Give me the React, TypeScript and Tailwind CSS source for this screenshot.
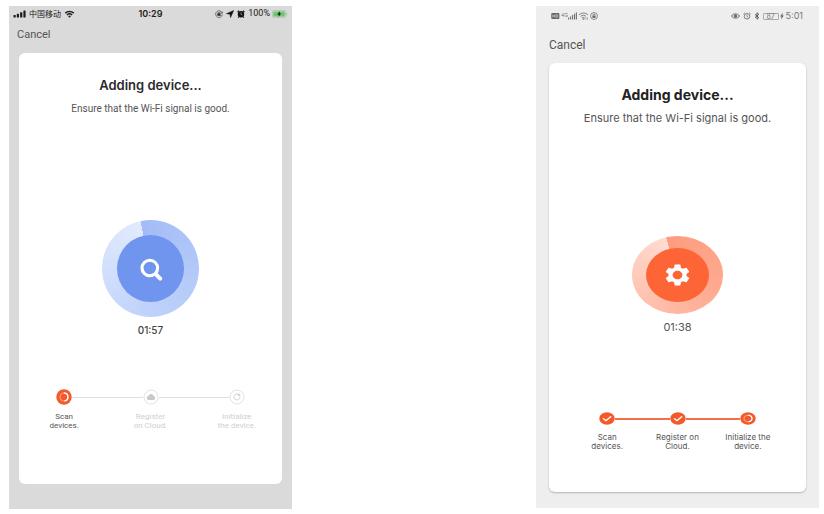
import type { ReactNode } from "react";
import { clsx } from "clsx";

interface Step {
  label: [string, string];
  state: "active" | "done" | "cloud" | "pending";
}

const iosSteps: Step[] = [
  { label: ["Scan", "devices."], state: "active" },
  { label: ["Register", "on Cloud."], state: "cloud" },
  { label: ["Initialize", "the device."], state: "pending" },
];

const androidSteps: Step[] = [
  { label: ["Scan", "devices."], state: "done" },
  { label: ["Register on", "Cloud."], state: "done" },
  { label: ["Initialize the", "device."], state: "active" },
];

function StepIcon({ state, className }: { state: Step["state"]; className: string }) {
  const filled = state === "active" || state === "done";
  return (
    <svg viewBox="0 0 16 16" preserveAspectRatio="none" className={className} fill="none" aria-hidden="true">
      <circle cx="8" cy="8" r={filled ? 7.7 : 7} fill={filled ? "#f4592b" : "#fff"} stroke={filled ? "none" : "#dedede"} strokeWidth="0.9" />
      {state === "active" && (
        <>
          <circle cx="8" cy="8" r="4" stroke="#fa9a7c" strokeWidth="1.2" />
          <path d="M8.3 4a4 4 0 0 1 .5 7.9" stroke="#fff" strokeWidth="1.3" strokeLinecap="round" />
        </>
      )}
      {state === "done" && (
        <path d="M4.4 8.2 7 10.7l4.7-4.9" stroke="#fff" strokeWidth="1.5" strokeLinecap="round" strokeLinejoin="round" />
      )}
      {state === "cloud" && (
        <path d="M5.7 10.9a1.9 1.9 0 0 1-.2-3.8 2.7 2.7 0 0 1 5.2-.1 2 2 0 0 1-.1 3.9z" fill="#c9c9c9" />
      )}
      {state === "pending" && (
        <path d="M10.5 6.3A3 3 0 1 0 11 8.2M10.8 4.9v1.7H9.2" stroke="#cbcbcb" strokeWidth="0.9" strokeLinecap="round" />
      )}
    </svg>
  );
}

interface StepsProps {
  steps: Step[];
  className: string;
  iconClassName: string;
  lineClassName: string;
  labelClassName: string;
}

function Steps({ steps, className, iconClassName, lineClassName, labelClassName }: StepsProps) {
  return (
    <ol className={clsx("grid grid-cols-3", className)}>
      {steps.map((step, i) => (
        <li key={step.label[0]}>
          <div className="flex items-center">
            <span className={clsx("flex-1", i > 0 && lineClassName)} />
            <StepIcon state={step.state} className={iconClassName} />
            <span className={clsx("flex-1", i < steps.length - 1 && lineClassName)} />
          </div>
          <p
            className={clsx(
              "text-center text-[8px] leading-[9px] whitespace-nowrap",
              labelClassName,
              step.state === "active" || step.state === "done" ? "text-[#555]" : "text-[#cfcfcf]",
            )}
          >
            {step.label[0]}
            <br />
            {step.label[1]}
          </p>
        </li>
      ))}
    </ol>
  );
}

function Dial({ ringClassName, coreClassName, children }: { ringClassName: string; coreClassName: string; children: ReactNode }) {
  return (
    <div className={clsx("mx-auto flex items-center justify-center rounded-[50%]", ringClassName)}>
      <div className={clsx("flex items-center justify-center rounded-[50%]", coreClassName)}>{children}</div>
    </div>
  );
}

function IosStatusBar() {
  return (
    <div className="grid h-4 grid-cols-[1fr_auto_1fr] items-center px-1 text-[9px] text-[#222]">
      <div className="flex items-center gap-[3px]">
        <svg viewBox="0 0 13 8" className="h-2 w-[13px]" fill="#1c1c1c" aria-hidden="true">
          <rect x="0.5" y="5" width="2.2" height="2.5" rx="0.6" />
          <rect x="3.8" y="3.8" width="2.2" height="3.7" rx="0.6" />
          <rect x="7.1" y="2.2" width="2.2" height="5.3" rx="0.6" />
          <rect x="10.4" y="0.4" width="2.2" height="7.1" rx="0.6" />
        </svg>
        <span className="font-['Noto_Sans_CJK_SC',sans-serif] text-[8px]">中国移动</span>
        <svg viewBox="0 0 12 9" className="h-2 w-[11px]" fill="none" stroke="#222" strokeWidth="1.7" aria-hidden="true">
          <path d="M1.2 3.5a7 7 0 0 1 9.6 0M3.1 5.6a4.2 4.2 0 0 1 5.8 0" />
          <path d="M4.4 7 6 8.6 7.6 7a2.3 2.3 0 0 0-3.2 0z" fill="#222" stroke="none" />
        </svg>
      </div>
      <span className="font-semibold">10:29</span>
      <div className="flex items-center justify-end gap-[3px]">
        <svg viewBox="0 0 10 10" className="size-2" fill="none" stroke="#333" strokeWidth="0.8" aria-hidden="true">
          <path d="M9.2 5.6A4.2 4.2 0 1 1 9 3.8M9.4 2.2 9 4.1 7.2 3.6" />
          <rect x="3.4" y="4.6" width="3.2" height="2.4" fill="#333" />
          <path d="M4 4.6v-.7a1 1 0 0 1 2 0v.7" />
        </svg>
        <svg viewBox="0 0 10 10" className="size-2" fill="#111" stroke="#111" strokeWidth="0.6" strokeLinejoin="round" aria-hidden="true">
          <path d="M9.6.6 5.7 9.5 4.9 5.3.5 4.6z" />
        </svg>
        <svg viewBox="0 0 10 10" className="size-2" aria-hidden="true">
          <circle cx="5" cy="5.3" r="4" fill="#111" />
          <path d="M.7 2.6 2.6.8M9.3 2.6 7.4.8M2.3 8.4 1.4 9.6M7.7 8.4l.9 1.2" stroke="#111" strokeWidth="1.4" />
          <path d="M5 3v2.5l1.7.8" stroke="#ddd" strokeWidth="0.7" fill="none" />
        </svg>
        <span className="font-[Roboto,sans-serif]">100%</span>
        <svg viewBox="0 0 17 8" className="-ml-px h-2 w-4" aria-hidden="true">
          <rect x="0.4" y="0.4" width="14.2" height="7.2" rx="1.8" fill="#dcdcdc" stroke="#9db79d" strokeWidth="0.7" />
          <rect x="1.4" y="1.3" width="12.2" height="5.4" rx="1" fill="#6acb6d" />
          <path d="M15.5 2.8c1 .3 1 2.1 0 2.4z" fill="#999" />
          <path d="M8.6.8 5.4 4.4h2L6.7 7.2l3.1-3.7H8z" fill="#111" />
        </svg>
      </div>
    </div>
  );
}

function AndroidStatusBar() {
  return (
    <div className="flex h-5 items-center justify-between pr-4 pl-[15px] text-[9px] text-[#777]">
      <div className="flex items-center gap-px">
        <svg viewBox="0 0 10 8" className="h-2 w-[9px]" aria-hidden="true">
          <rect x="0.3" y="0.7" width="9" height="6.6" rx="1" fill="#666" />
          <path d="M2 2.4v3.2M4.2 2.4v3.2M2 4h2.2M5.6 2.4v3.2h.8a1.2 1.6 0 0 0 0-3.2z" stroke="#ddd" strokeWidth="0.7" fill="none" />
        </svg>
        <span className="self-start text-[5px] leading-[7px]">4G</span>
        <svg viewBox="0 0 10 8" className="-ml-px h-2 w-[9px]" fill="#777" aria-hidden="true">
          <path d="M0 5.8h1.3V8H0zM2.2 4.5h1.3V8H2.2zM4.4 3h1.3v5H4.4zM6.6 1.6h1.3V8H6.6zM8.7 0H10v8H8.7z" />
        </svg>
        <svg viewBox="0 0 12 9" className="h-2 w-[11px]" fill="none" stroke="#777" strokeWidth="1" aria-hidden="true">
          <path d="M1 3.1a7.4 7.4 0 0 1 10 0M2.7 4.9a5 5 0 0 1 6.2-.2M4.3 6.6a2.6 2.6 0 0 1 3 0" />
          <path d="M5 7.6h2L6 8.8zM8.8 6v2.8M10.5 6v2.8" fill="#777" strokeWidth="0.6" />
        </svg>
        <svg viewBox="0 0 10 10" className="size-2" fill="none" stroke="#666" strokeWidth="0.9" aria-hidden="true">
          <circle cx="5" cy="5" r="4.3" />
          <rect x="3" y="4.5" width="4" height="2.8" fill="#666" stroke="none" />
          <path d="M3.8 4.5v-.8a1.2 1.2 0 0 1 2.4 0v.8" />
        </svg>
      </div>
      <div className="flex items-center gap-[3px]">
        <svg viewBox="0 0 10 8" className="h-2 w-[9px]" fill="none" stroke="#666" strokeWidth="1" aria-hidden="true">
          <path d="M.5 4C2.6.7 7.4.7 9.5 4 7.4 7.3 2.6 7.3.5 4z" />
          <circle cx="5" cy="4" r="1.5" fill="#666" />
        </svg>
        <svg viewBox="0 0 10 10" className="size-2" fill="none" stroke="#666" strokeWidth="1" aria-hidden="true">
          <circle cx="5" cy="5.4" r="3.5" />
          <path d="M.6 2.6 2.4.9M9.4 2.6 7.6.9M5 3.4v2.2l1.5.9" />
        </svg>
        <svg viewBox="0 0 8 10" className="h-2 w-[6px]" fill="none" stroke="#555" strokeWidth="1.3" aria-hidden="true">
          <path d="M1.3 2.8 6.3 7.2 4 9.4V.6l2.3 2.2-5 4.4" />
        </svg>
        <span className="flex h-[7px] w-4 items-center justify-center rounded-[1px] border border-[#aaa] text-[7px] leading-none">87</span>
        <svg viewBox="0 0 4 8" className="-ml-[2px] h-2 w-1" fill="#666" aria-hidden="true">
          <path d="M2.8.5.2 4.4h1.3L1.1 7.6 3.8 3.6H2.4z" />
        </svg>
        <span className="-ml-px">5:01</span>
      </div>
    </div>
  );
}

export default function App() {
  return (
    <main className="grid grid-cols-[283fr_244fr_283fr] items-start bg-white pt-[6px] pr-[5px] pb-[5px] pl-[9px] font-['Inter',sans-serif]">
      <section className="bg-[#dadada] pb-[25px]">
        <IosStatusBar />
        <div className="flex h-[31px] items-start px-2 pt-[5px]">
          <button type="button" className="font-[Roboto,sans-serif] text-[11px] leading-4 text-[#555]">Cancel</button>
        </div>
        <div className="mx-[10px] rounded-md bg-white pt-[22px] pb-[54px]">
          <h1 className="text-center text-[13px] leading-5 font-semibold text-[#2b2b2b]">Adding device...</h1>
          <p className="mt-[6px] text-center font-[Roboto,sans-serif] text-[10px] leading-4 text-[#555]">Ensure that the Wi-Fi signal is good.</p>
          <Dial
            ringClassName="mt-[103px] size-[97px] bg-[conic-gradient(from_-12deg,#a3bcf6,#b6cbf9_35%,#c0d2fa_55%,#d0defc_75%,#e1eafd)]"
            coreClassName="size-[67px] bg-[#7095ef]"
          >
            <svg viewBox="0 0 24 24" className="size-6" fill="none" stroke="#fff" strokeLinecap="round" aria-hidden="true">
              <circle cx="10.8" cy="11" r="7.8" strokeWidth="3.1" />
              <path d="m17.2 17.6 4 4" strokeWidth="4" />
            </svg>
          </Dial>
          <p className="mt-[5px] text-center text-[10px] leading-4 font-medium text-[#444]">01:57</p>
          <Steps
            steps={iosSteps}
            className="mx-[2px] mt-[51px]"
            iconClassName="size-4"
            lineClassName="h-px bg-[#dfdfdf]"
            labelClassName="mt-[7px] font-[Roboto,sans-serif]"
          />
        </div>
      </section>

      <section className="col-start-3 bg-[#eee] pb-4">
        <AndroidStatusBar />
        <div className="flex h-[37px] items-center px-[13px]">
          <button type="button" className="font-[Roboto,sans-serif] text-[12px] leading-4 text-[#555]">Cancel</button>
        </div>
        <div className="mx-[13px] rounded-md bg-white pt-[22px] pb-[41px] shadow-[0_1px_2px_rgba(0,0,0,0.25)]">
          <h1 className="text-center text-[14px] leading-5 font-bold text-[#222]">Adding device...</h1>
          <p className="mt-[5px] text-center text-[11px] leading-4 text-[#555]">Ensure that the Wi-Fi signal is good.</p>
          <Dial
            ringClassName="mt-[110px] h-[78px] w-[91px] bg-[conic-gradient(from_-17deg,#fd9c7e,#fea78c_30%,#ffb7a1_55%,#ffc6b5_75%,#ffdcd2)]"
            coreClassName="h-[54px] w-[63px] bg-[#fd6536]"
          >
            <svg viewBox="2 2 20 20" preserveAspectRatio="none" className="h-[22px] w-[25px]" fill="#fff" aria-hidden="true">
              <path d="M19.14 12.94c.04-.3.06-.61.06-.94 0-.32-.02-.64-.07-.94l2.03-1.58c.18-.14.23-.41.12-.61l-1.92-3.32c-.12-.22-.37-.29-.59-.22l-2.39.96c-.5-.38-1.03-.7-1.62-.94l-.36-2.54c-.04-.24-.24-.41-.48-.41h-3.84c-.24 0-.43.17-.47.41l-.36 2.54c-.59.24-1.13.57-1.62.94l-2.39-.96c-.22-.08-.47 0-.59.22L2.74 8.87c-.12.21-.08.47.12.61l2.03 1.58c-.05.3-.09.63-.09.94s.02.64.07.94l-2.03 1.58c-.18.14-.23.41-.12.61l1.92 3.32c.12.22.37.29.59.22l2.39-.96c.5.38 1.03.7 1.62.94l.36 2.54c.05.24.24.41.48.41h3.84c.24 0 .44-.17.47-.41l.36-2.54c.59-.24 1.13-.56 1.62-.94l2.39.96c.22.08.47 0 .59-.22l1.92-3.32c.12-.22.07-.47-.12-.61l-2.01-1.58zM12 15.9c-2.15 0-3.9-1.75-3.9-3.9s1.75-3.9 3.9-3.9 3.9 1.75 3.9 3.9-1.75 3.9-3.9 3.9z" />
            </svg>
          </Dial>
          <p className="mt-[5px] text-center text-[11px] leading-4 text-[#555]">01:38</p>
          <Steps
            steps={androidSteps}
            className="mx-[23px] mt-[77px]"
            iconClassName="h-[13px] w-4"
            lineClassName="h-[2px] bg-[#f4704a]"
            labelClassName="mt-2"
          />
        </div>
      </section>
    </main>
  );
}
